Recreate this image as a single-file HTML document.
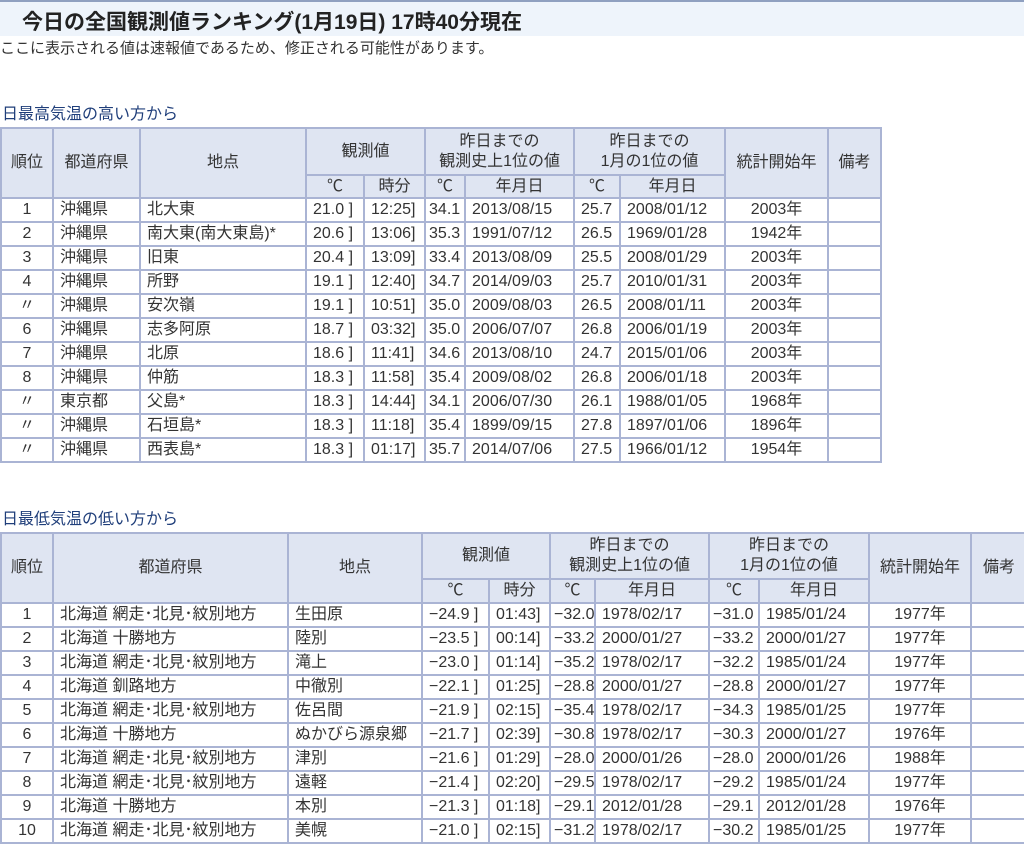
<!DOCTYPE html><html><head><meta charset="utf-8"><style>
body{margin:0;width:1024px;height:843px;overflow:hidden;background:#fff;font-family:"Liberation Sans","Noto Sans CJK JP",sans-serif;color:#222}
.tb{position:absolute;left:0;top:0;width:1024px;height:36px;background:#eef4fb;border-top:2px solid #8fa0c0;box-sizing:border-box}
.tb span{position:absolute;left:22px;top:4px;font-size:21px;font-weight:bold;color:#222}
.note{position:absolute;left:0;top:37px;font-size:15px;color:#333}
.sec{position:absolute;left:2px;font-size:16px;color:#1f3e7a}
table{position:absolute;left:0;border-collapse:collapse;table-layout:fixed;font-size:16px;color:#333}
td,th{border:2px solid #aab4d4;padding:0 0 0 6px;white-space:nowrap;overflow:hidden;font-weight:normal;line-height:20px}
th{background:#dfe5f2;text-align:center;padding:0}
td.c{text-align:center;padding:0}
tr.d td{height:22px}
</style></head><body>
<div class="tb"><span>今日の全国観測値ランキング(1月19日) 17時40分現在</span></div>
<div class="note">ここに表示される値は速報値であるため、修正される可能性があります。</div>
<div class="sec" style="top:100px">日最高気温の高い方から</div>
<table style="top:127px;width:880px">
<colgroup><col style="width:52px"><col style="width:87px"><col style="width:166px"><col style="width:58px"><col style="width:61px"><col style="width:40px"><col style="width:109px"><col style="width:46px"><col style="width:105px"><col style="width:103px"><col style="width:53px"></colgroup>
<tr style="height:47px"><th rowspan="2">順位</th><th rowspan="2">都道府県</th><th rowspan="2">地点</th><th colspan="2">観測値</th><th colspan="2">昨日までの<br>観測史上1位の値</th><th colspan="2">昨日までの<br>1月の1位の値</th><th rowspan="2">統計開始年</th><th rowspan="2">備考</th></tr>
<tr style="height:23px"><th>℃</th><th>時分</th><th>℃</th><th>年月日</th><th>℃</th><th>年月日</th></tr>
<tr class="d"><td class="c">1</td><td>沖縄県</td><td>北大東</td><td>21.0 ]</td><td>12:25]</td><td style="padding-left:3px">34.1</td><td>2013/08/15</td><td>25.7</td><td>2008/01/12</td><td class="c">2003年</td><td></td></tr>
<tr class="d"><td class="c">2</td><td>沖縄県</td><td>南大東(南大東島)*</td><td>20.6 ]</td><td>13:06]</td><td style="padding-left:3px">35.3</td><td>1991/07/12</td><td>26.5</td><td>1969/01/28</td><td class="c">1942年</td><td></td></tr>
<tr class="d"><td class="c">3</td><td>沖縄県</td><td>旧東</td><td>20.4 ]</td><td>13:09]</td><td style="padding-left:3px">33.4</td><td>2013/08/09</td><td>25.5</td><td>2008/01/29</td><td class="c">2003年</td><td></td></tr>
<tr class="d"><td class="c">4</td><td>沖縄県</td><td>所野</td><td>19.1 ]</td><td>12:40]</td><td style="padding-left:3px">34.7</td><td>2014/09/03</td><td>25.7</td><td>2010/01/31</td><td class="c">2003年</td><td></td></tr>
<tr class="d"><td class="c">〃</td><td>沖縄県</td><td>安次嶺</td><td>19.1 ]</td><td>10:51]</td><td style="padding-left:3px">35.0</td><td>2009/08/03</td><td>26.5</td><td>2008/01/11</td><td class="c">2003年</td><td></td></tr>
<tr class="d"><td class="c">6</td><td>沖縄県</td><td>志多阿原</td><td>18.7 ]</td><td>03:32]</td><td style="padding-left:3px">35.0</td><td>2006/07/07</td><td>26.8</td><td>2006/01/19</td><td class="c">2003年</td><td></td></tr>
<tr class="d"><td class="c">7</td><td>沖縄県</td><td>北原</td><td>18.6 ]</td><td>11:41]</td><td style="padding-left:3px">34.6</td><td>2013/08/10</td><td>24.7</td><td>2015/01/06</td><td class="c">2003年</td><td></td></tr>
<tr class="d"><td class="c">8</td><td>沖縄県</td><td>仲筋</td><td>18.3 ]</td><td>11:58]</td><td style="padding-left:3px">35.4</td><td>2009/08/02</td><td>26.8</td><td>2006/01/18</td><td class="c">2003年</td><td></td></tr>
<tr class="d"><td class="c">〃</td><td>東京都</td><td>父島*</td><td>18.3 ]</td><td>14:44]</td><td style="padding-left:3px">34.1</td><td>2006/07/30</td><td>26.1</td><td>1988/01/05</td><td class="c">1968年</td><td></td></tr>
<tr class="d"><td class="c">〃</td><td>沖縄県</td><td>石垣島*</td><td>18.3 ]</td><td>11:18]</td><td style="padding-left:3px">35.4</td><td>1899/09/15</td><td>27.8</td><td>1897/01/06</td><td class="c">1896年</td><td></td></tr>
<tr class="d"><td class="c">〃</td><td>沖縄県</td><td>西表島*</td><td>18.3 ]</td><td>01:17]</td><td style="padding-left:3px">35.7</td><td>2014/07/06</td><td>27.5</td><td>1966/01/12</td><td class="c">1954年</td><td></td></tr>
</table>
<div class="sec" style="top:505px">日最低気温の低い方から</div>
<table style="top:532px;width:1026px">
<colgroup><col style="width:52px"><col style="width:235px"><col style="width:134px"><col style="width:67px"><col style="width:61px"><col style="width:45px"><col style="width:114px"><col style="width:50px"><col style="width:110px"><col style="width:102px"><col style="width:56px"></colgroup>
<tr style="height:46px"><th rowspan="2">順位</th><th rowspan="2">都道府県</th><th rowspan="2">地点</th><th colspan="2">観測値</th><th colspan="2">昨日までの<br>観測史上1位の値</th><th colspan="2">昨日までの<br>1月の1位の値</th><th rowspan="2">統計開始年</th><th rowspan="2">備考</th></tr>
<tr style="height:24px"><th>℃</th><th>時分</th><th>℃</th><th>年月日</th><th>℃</th><th>年月日</th></tr>
<tr class="d"><td class="c">1</td><td>北海道 網走･北見･紋別地方</td><td>生田原</td><td>−24.9 ]</td><td>01:43]</td><td style="padding-left:3px">−32.0</td><td>1978/02/17</td><td style="padding-left:3px">−31.0</td><td>1985/01/24</td><td class="c">1977年</td><td></td></tr>
<tr class="d"><td class="c">2</td><td>北海道 十勝地方</td><td>陸別</td><td>−23.5 ]</td><td>00:14]</td><td style="padding-left:3px">−33.2</td><td>2000/01/27</td><td style="padding-left:3px">−33.2</td><td>2000/01/27</td><td class="c">1977年</td><td></td></tr>
<tr class="d"><td class="c">3</td><td>北海道 網走･北見･紋別地方</td><td>滝上</td><td>−23.0 ]</td><td>01:14]</td><td style="padding-left:3px">−35.2</td><td>1978/02/17</td><td style="padding-left:3px">−32.2</td><td>1985/01/24</td><td class="c">1977年</td><td></td></tr>
<tr class="d"><td class="c">4</td><td>北海道 釧路地方</td><td>中徹別</td><td>−22.1 ]</td><td>01:25]</td><td style="padding-left:3px">−28.8</td><td>2000/01/27</td><td style="padding-left:3px">−28.8</td><td>2000/01/27</td><td class="c">1977年</td><td></td></tr>
<tr class="d"><td class="c">5</td><td>北海道 網走･北見･紋別地方</td><td>佐呂間</td><td>−21.9 ]</td><td>02:15]</td><td style="padding-left:3px">−35.4</td><td>1978/02/17</td><td style="padding-left:3px">−34.3</td><td>1985/01/25</td><td class="c">1977年</td><td></td></tr>
<tr class="d"><td class="c">6</td><td>北海道 十勝地方</td><td>ぬかびら源泉郷</td><td>−21.7 ]</td><td>02:39]</td><td style="padding-left:3px">−30.8</td><td>1978/02/17</td><td style="padding-left:3px">−30.3</td><td>2000/01/27</td><td class="c">1976年</td><td></td></tr>
<tr class="d"><td class="c">7</td><td>北海道 網走･北見･紋別地方</td><td>津別</td><td>−21.6 ]</td><td>01:29]</td><td style="padding-left:3px">−28.0</td><td>2000/01/26</td><td style="padding-left:3px">−28.0</td><td>2000/01/26</td><td class="c">1988年</td><td></td></tr>
<tr class="d"><td class="c">8</td><td>北海道 網走･北見･紋別地方</td><td>遠軽</td><td>−21.4 ]</td><td>02:20]</td><td style="padding-left:3px">−29.5</td><td>1978/02/17</td><td style="padding-left:3px">−29.2</td><td>1985/01/24</td><td class="c">1977年</td><td></td></tr>
<tr class="d"><td class="c">9</td><td>北海道 十勝地方</td><td>本別</td><td>−21.3 ]</td><td>01:18]</td><td style="padding-left:3px">−29.1</td><td>2012/01/28</td><td style="padding-left:3px">−29.1</td><td>2012/01/28</td><td class="c">1976年</td><td></td></tr>
<tr class="d"><td class="c">10</td><td>北海道 網走･北見･紋別地方</td><td>美幌</td><td>−21.0 ]</td><td>02:15]</td><td style="padding-left:3px">−31.2</td><td>1978/02/17</td><td style="padding-left:3px">−30.2</td><td>1985/01/25</td><td class="c">1977年</td><td></td></tr>
</table>
</body></html>
